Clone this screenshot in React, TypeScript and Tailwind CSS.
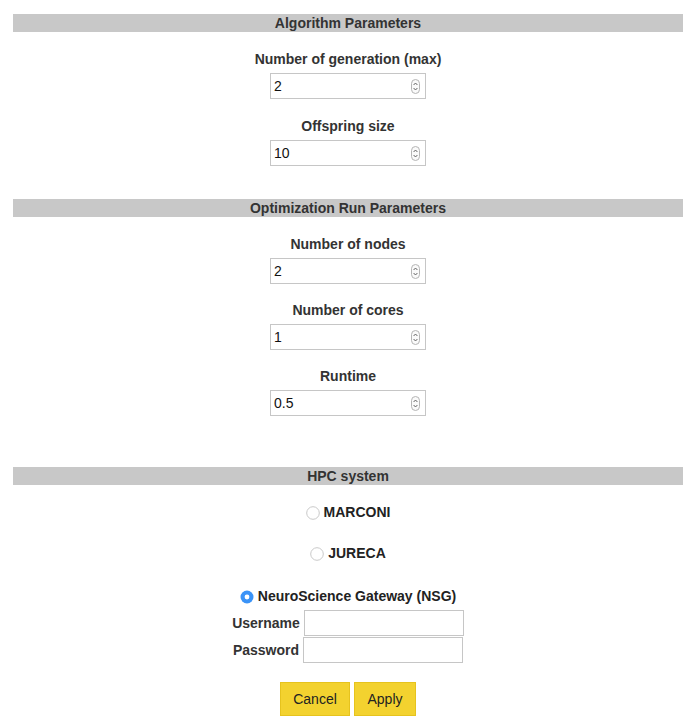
import React from "react";

const font = { fontFamily: '"Liberation Sans", Arial, Helvetica, sans-serif' };

function Spinner() {
  return (
    <svg width="9" height="15" viewBox="0 0 9 15" className="absolute right-[5px] top-[5px]">
      <rect x="0.5" y="0.5" width="8" height="14" rx="4" fill="#fafafa" stroke="#b5b5b5" />
      <path d="M2.6 6 L4.5 4 L6.4 6" fill="none" stroke="#555" strokeWidth="0.9" />
      <path d="M2.6 9 L4.5 11 L6.4 9" fill="none" stroke="#555" strokeWidth="0.9" />
    </svg>
  );
}

function NumInput({ value }: { value: string }) {
  return (
    <div className="relative mx-auto w-[156px] h-[26px] border border-[#c6c6c6] bg-white flex items-center pl-[3px] text-[14px] text-[#111]">
      {value}
      <Spinner />
    </div>
  );
}

function Field({ label, value, mt }: { label: string; value: string; mt: string }) {
  return (
    <div className={mt}>
      <div className="text-center font-bold text-[14px] leading-[18px] text-[#333]">{label}</div>
      <div className="mt-[5px]">
        <NumInput value={value} />
      </div>
    </div>
  );
}

function Bar({ title, mt }: { title: string; mt: string }) {
  return (
    <div className={`${mt} mx-[13px] h-[18px] bg-[#c8c8c8] flex items-center justify-center font-bold text-[14px] text-[#333]`}>
      {title}
    </div>
  );
}

function Radio({ label, checked, mt }: { label: string; checked?: boolean; mt: string }) {
  return (
    <div className={`${mt} flex items-center justify-center h-[17px]`}>
      {checked ? (
        <svg width="14" height="14" viewBox="0 0 14 14" className="mr-[4px]">
          <circle cx="7" cy="7" r="6.5" fill="#3a93f7" />
          <circle cx="7" cy="7" r="2.4" fill="#fff" />
        </svg>
      ) : (
        <svg width="14" height="14" viewBox="0 0 14 14" className="mr-[4px]">
          <circle cx="7" cy="7" r="6.3" fill="#fff" stroke="#c9c9c9" strokeWidth="1" />
        </svg>
      )}
      <span className="font-bold text-[14px] text-[#222]">{label}</span>
    </div>
  );
}

export default function App() {
  return (
    <div style={font} className="w-[696px] h-[728px] bg-white overflow-hidden pt-[14px]">
      <Bar title="Algorithm Parameters" mt="mt-0" />
      <Field label="Number of generation (max)" value="2" mt="mt-[18px]" />
      <Field label="Offspring size" value="10" mt="mt-[18px]" />

      <Bar title="Optimization Run Parameters" mt="mt-[33px]" />
      <Field label="Number of nodes" value="2" mt="mt-[18px]" />
      <Field label="Number of cores" value="1" mt="mt-[17px]" />
      <Field label="Runtime" value="0.5" mt="mt-[17px]" />

      <Bar title="HPC system" mt="mt-[51px]" />
      <Radio label="MARCONI" mt="mt-[19px]" />
      <Radio label="JURECA" mt="mt-[24px]" />
      <Radio label="NeuroScience Gateway (NSG)" checked mt="mt-[26px]" />

      <div className="mt-[5px] flex items-center justify-center">
        <span className="font-bold text-[14px] text-[#333] mr-[4px]">Username</span>
        <div className="w-[160px] h-[26px] border border-[#c6c6c6] bg-white" />
      </div>
      <div className="mt-[1px] flex items-center justify-center">
        <span className="font-bold text-[14px] text-[#333] mr-[4px]">Password</span>
        <div className="w-[160px] h-[26px] border border-[#c6c6c6] bg-white" />
      </div>

      <div className="mt-[19px] flex justify-center gap-[4px]">
        <button className="w-[70px] h-[34px] bg-[#f3d22f] border border-[#e6c31e] text-[14px] text-[#222]">Cancel</button>
        <button className="w-[62px] h-[34px] bg-[#f3d22f] border border-[#e6c31e] text-[14px] text-[#222]">Apply</button>
      </div>
    </div>
  );
}
